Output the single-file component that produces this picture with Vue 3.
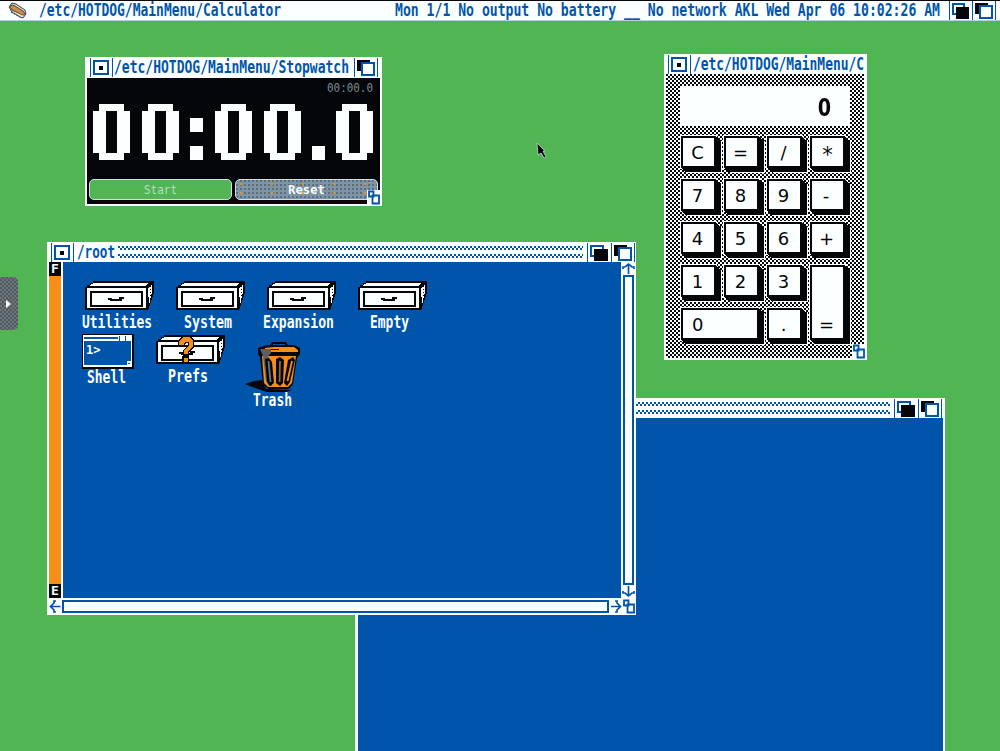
<script setup>
import { h } from 'vue'

const Px = (p) =>
  h('svg', { class: 'px', width: p.w, height: 20, style: { width: p.w + 'px' } }, [
    h('text', { x: 0, y: 16, textLength: p.w, lengthAdjust: 'spacingAndGlyphs' }, p.t),
  ])
Px.props = ['t', 'w']

const Depth = (p) =>
  h('svg', { class: 'gadget', width: 24, height: 19, viewBox: '0 0 24 19', 'shape-rendering': 'crispEdges' },
    p.front
      ? [
          h('path', { d: 'M0 0h1v19h-1zM23 0h1v19h-1z', fill: '#0055ab' }),
          h('path', { d: 'M3 2h13v11h-13z', fill: '#04060a' }),
          h('path', { d: 'M8 5h12v12h-12z', fill: '#fcffff', stroke: '#0055ab', 'stroke-width': 2 }),
        ]
      : [
          h('path', { d: 'M0 0h1v19h-1z', fill: '#0055ab' }),
          h('path', { d: 'M4 3h12v10h-12z', fill: '#fcffff', stroke: '#0055ab', 'stroke-width': 2 }),
          h('path', { d: 'M7 6h14v12h-14z', fill: '#04060a' }),
        ])
Depth.props = { front: Boolean }

const CloseBox = () =>
  h('svg', { class: 'gadget', width: 24, height: 19, viewBox: '0 0 24 19', 'shape-rendering': 'crispEdges' }, [
    h('path', { d: 'M0 0h1v19h-1zM22 0h1v19h-1z', fill: '#0055ab' }),
    h('path', { d: 'M4 3h14v13h-14z', fill: 'none', stroke: '#0055ab', 'stroke-width': 2 }),
    h('path', { d: 'M9 8h4v4h-4z', fill: '#04060a' }),
  ])

const Sizer = () =>
  h('svg', { class: 'sizer', width: 14, height: 15, viewBox: '0 0 14 15' }, [
    h('path', { d: 'M0 0h14v15h-14z', fill: '#fcffff', stroke: 'none' }),
    h('path', { d: 'M2 1.5h4.500v5h-4.500zM5.500 5.500h6.500v8h-6.500z', fill: 'none', stroke: '#0055ab', 'stroke-width': 1.8 }),
  ])

const bigDigits = [
  { c: '0', x: 6, s: 0 }, { c: '0', x: 55, s: 0 }, { c: ':', x: 103, s: 1 },
  { c: '0', x: 128, s: 0 }, { c: '0', x: 177, s: 0 }, { c: '.', x: 225, s: 1 }, { c: '0', x: 249, s: 0 },
]
const keys = ['C', '=', '/', '*', '7', '8', '9', '-', '4', '5', '6', '+', '1', '2', '3', '=', '0', '.']
const keyClass = (i) => ({ tall: i === 15, wide: i === 16, star: i === 3, dash: i === 7 })
const drawers = [
  { t: 'Utilities', w: 70, x: 22, y: 19 },
  { t: 'System', w: 48, x: 113, y: 19 },
  { t: 'Expansion', w: 71, x: 204, y: 19 },
  { t: 'Empty', w: 39, x: 295, y: 19 },
  { t: 'Prefs', w: 40, x: 93, y: 73, q: true },
]
</script>

<template>
  <div class="desk">
    <header class="bar">
      <svg class="dog" width="20" height="17" viewBox="0 0 20 17">
        <path d="M2 5L5 1l4 1 9 6 1 4-3 4-3-1-8-5z" fill="#e2d8c6" stroke="#39434a" />
        <path d="M3 4q2-2 5 0l8 5q4 4 0 4L5 8z" fill="#b88761" stroke="#3c342c" stroke-width=".8" />
        <path d="M4 5l3 2 1-2 2 4 2-1 1 3 3 0" fill="none" stroke="#f68e19" />
        <path d="M4 10l9 5" stroke="#39434a" stroke-dasharray="2 1" />
      </svg>
      <Px t="/etc/HOTDOG/MainMenu/Calculator" :w="242" />
      <span class="grow"></span>
      <Px t="Mon 1/1 No output No battery __ No network AKL Wed Apr 06 10:02:26 AM" :w="545" />
      <span class="bargad"><Depth /><Depth front /></span>
    </header>

    <section class="win back">
      <div class="title"><span class="stripes"></span><Depth /><Depth front /></div>
      <div class="blue"></div>
    </section>

    <section class="win root">
      <div class="title"><CloseBox /><Px t="/root" :w="38" /><span class="stripes"></span><Depth /><Depth front /></div>
      <div class="body">
        <div class="fuel"><b>F</b><i></i><b>E</b></div>
        <div class="blue">
          <div v-for="d in drawers" :key="d.t" class="item" :style="{ left: d.x + 'px', top: d.y + 'px' }">
            <svg width="70" height="30" viewBox="0 0 70 30" shape-rendering="crispEdges">
              <path d="M0 6h2V4h3V2h3V0H69V11L65 24L63 29H0z" fill="#04060a" />
              <path d="M4 5L9 2H64L60 5z" fill="#fcffff" />
              <path d="M63 8L67 3V11L64 24z" fill="#fcffff" />
              <path d="M65 5v16M67 4v12" stroke="#04060a" stroke-dasharray="1 2" />
              <path d="M2 7H61V27H2z" fill="#fcffff" />
              <path d="M6 11H57V25H6z" fill="#fcffff" stroke="#04060a" stroke-width="2" />
              <path d="M23 17h4v1h7v-2h5v2h-2v2H25v-1h-2z" fill="#04060a" />
              <g v-if="d.q">
                <path d="M22 5l4-4h8l4 4v7l-5 5v4h-6v-6l5-5v-2h-2l-2 4h-6zM26 21h7v8h-7z" fill="#04060a" />
                <path d="M23 6l4-4h7l3 4v6l-5 4v3h-4v-4l5-4v-4h-4l-1 3h-5zM28 23h4v4h-4z" fill="#f68e19" />
              </g>
            </svg>
            <Px :t="d.t" :w="d.w" />
          </div>
          <div class="item shell">
            <svg width="52" height="35" viewBox="0 0 52 35" shape-rendering="crispEdges">
              <path d="M0 0H52V35H0z" fill="#04060a" /><path d="M1 1H50V33H1z" fill="#fcffff" />
              <path d="M2 3H36V5H2zM2 7H49V31H2z" fill="#0055ab" />
              <path d="M37 2h1v5h-1zM43 2h1v5h-1z" fill="#0055ab" /><path d="M45 27h5v5h-5z" fill="#fcffff" />
              <path d="M46 29h2v1h-2z" fill="#0055ab" />
              <text x="4" y="20" class="prompt">1&gt;</text>
            </svg>
            <Px t="Shell" :w="39" />
          </div>
          <div class="item trash">
            <svg width="56" height="50" viewBox="0 0 56 50">
              <path d="M0 42l9-3 8-1 4 9 26 1-6 2H22L10 46z" fill="#04060a" />
              <path d="M13 6l9-3h3l2-3h14l2 3h6l6 3v6l-3 4-4 26-4 5H23l-5-5-3-27-2-3z" fill="#04060a" />
              <path d="M20 6l8-1h21l4 3v2H20z" fill="#f68e19" />
              <path d="M28 2h12v1H28z" fill="#0055ab" />
              <path d="M16 7h18v1H16zM20 11h33v1H20z" fill="#04060a" />
              <path d="M17 14h34l-4 27-4 4H23l-4-4z" fill="#f68e19" />
              <path d="M15 7h11v4l-3 3 3 9 1 21h-3l-3-5-3-25z" fill="#5c6064" />
              <g fill="#04060a"><path d="M20 17l4-1 3 4 2 21-4 3-3-4z" /><path d="M31 17l4-2 4 3-1 23-3 3-4-3z" /><path d="M43 18l5-3 2 3-5 22-3 4-3-3z" /></g>
              <g fill="none" stroke-width="1.8"><path d="M23.500 19l2 21" stroke="#70757a" /><path d="M35 19l-.5 21" stroke="#8a6a44" /><path d="M47 19l-4.500 20" stroke="#f68e19" /></g>
            </svg>
            <Px t="Trash" :w="39" />
          </div>
        </div>
        <div class="vscroll">
          <svg width="15" height="13" viewBox="0 0 15 13"><path d="M2 7V5h2l3.500-3 3.500 3h2v2M7.500 2v10" /></svg>
          <i></i>
          <svg width="15" height="13" viewBox="0 0 15 13"><path d="M2 6v2h2l3.500 3 3.500-3h2v-2M7.500 1v10" /></svg>
        </div>
      </div>
      <div class="hscroll">
        <svg width="14" height="15" viewBox="0 0 14 15"><path d="M8 2H6v2L2.500 7.500 6 11v2h2M2.500 7.500h10" /></svg>
        <i></i>
        <svg width="13" height="15" viewBox="0 0 13 15"><path d="M6 2h2v2l3.500 3.500L8 11v2H6M2 7.500h10" /></svg>
        <Sizer />
      </div>
    </section>

    <section class="win watch">
      <div class="title"><CloseBox /><Px t="/etc/HOTDOG/MainMenu/Stopwatch" :w="235" /><span class="grow"></span><Depth front /></div>
      <div class="face">
        <svg class="digits" width="293" height="100" viewBox="0 0 293 100">
          <defs>
            <filter id="cells" filterUnits="userSpaceOnUse" x="0" y="0" width="38" height="57" color-interpolation-filters="sRGB">
              <feFlood x="3" y="3" width="1" height="1" flood-color="#fff" result="dot" />
              <feOffset in="dot" dx="0" dy="0" x="0" y="0" width="6" height="7" result="cell" />
              <feTile in="cell" result="grid" />
              <feComposite in="SourceGraphic" in2="grid" operator="in" />
              <feComponentTransfer><feFuncA type="discrete" tableValues="0 1" /></feComponentTransfer>
              <feMorphology operator="dilate" radius="3" />
            </filter>
          </defs>
          <text class="mini" x="240" y="14" textLength="46" lengthAdjust="spacingAndGlyphs">00:00.0</text>
          <g v-for="(d, i) in bigDigits" :key="i" :transform="`translate(${d.x} 26)`">
            <g filter="url(#cells)">
              <text v-if="d.s" class="big" x="-6" y="56" textLength="25" lengthAdjust="spacingAndGlyphs">{{ d.c }}</text>
              <text v-else class="big zero" x="-4.500" y="57" textLength="46" lengthAdjust="spacingAndGlyphs">{{ d.c }}</text>
            </g>
          </g>
        </svg>
        <div class="btns">
          <button class="go"><Px t="Start" :w="33" /></button>
          <button class="re"><Px t="Reset" :w="37" /></button>
        </div>
      </div>
      <Sizer />
    </section>

    <section class="win calc">
      <div class="title"><CloseBox /><Px t="/etc/HOTDOG/MainMenu/C" :w="171" /></div>
      <div class="pad">
        <div class="out"><span>0</span></div>
        <div class="keys">
          <div v-for="(k, i) in keys" :key="i" class="key" :class="keyClass(i)">{{ k }}</div>
        </div>
      </div>
      <Sizer />
    </section>

    <div class="tab"><svg width="6" height="8"><path d="M0 0l5 4-5 4z" fill="#fcffff" /></svg></div>
    <svg class="cursor" width="12" height="18" viewBox="0 0 12 18"><path d="M1 1l8 8H7l3 6-2 1-3-5-3 2z" fill="#04060a" stroke="#c8d4d8" stroke-width=".8" /></svg>
  </div>
</template>

<style>
body { margin: 0; overflow: hidden; }
</style>

<style scoped>
.desk { position: relative; width: 1000px; height: 751px; overflow: hidden; background: #50b552; color: #0055ab; font-family: "DejaVu Sans Mono", monospace; }
.desk :deep(svg) { display: block; flex: none; }
.desk :deep(.px) { overflow: visible; fill: currentColor; font: bold 17px "DejaVu Sans Mono", monospace; }
.bar { display: flex; height: 21px; box-sizing: border-box; background: #fcffff; border-top: 1px solid #04060a; border-bottom: 1px solid #b8cfe0; padding: 0 4px 0 7px; }
.bar :deep(.px) { margin-top: -1px; }
.dog { margin: 1px 12px 0 0; }
.grow { flex: 1; }
.bargad { display: flex; margin-left: 9px; }
.bargad :deep(svg:first-child) { width: 23px; }
.win { position: absolute; background: #fcffff; display: flex; flex-direction: column; box-sizing: border-box; }
.title { display: flex; height: 20px; flex: none; box-sizing: border-box; padding-top: 1px; }
.title :deep(.px) { margin-top: -1px; }
.stripes { flex: 1; margin: 3px 4px 3px; background:
  repeating-linear-gradient(90deg, #0055ab 0 2px, transparent 2px 4px) 0 0 / 100% 2px no-repeat,
  repeating-linear-gradient(90deg, transparent 0 2px, #0055ab 2px 4px) 0 2px / 100% 2px no-repeat,
  repeating-linear-gradient(90deg, #0055ab 0 2px, transparent 2px 4px) 0 8px / 100% 2px no-repeat,
  repeating-linear-gradient(90deg, transparent 0 2px, #0055ab 2px 4px) 0 10px / 100% 2px no-repeat; }
.blue { position: relative; background: #0055ab; flex: 1; }
.back { left: 355px; top: 398px; width: 590px; height: 360px; padding: 0 2px 0 3px; }
.back .title { padding-right: 1px; }
.root { left: 47px; top: 242px; width: 589px; height: 373px; }
.root .title { padding: 1px 1px 0 4px; }
.root .title :deep(.px) { margin-left: 2px; }
.root .title .stripes { margin-left: 3px; }
.body { display: flex; height: 336px; }
.fuel { display: flex; flex-direction: column; width: 12px; margin: 0 2px 0 2px; }
.fuel b { height: 14px; background: #04060a; color: #fcffff; font-size: 13px; line-height: 14px; text-align: center; }
.fuel i { flex: 1; background: #f68e19; }
.vscroll { width: 15px; display: flex; flex-direction: column; align-items: center; }
.vscroll svg, .hscroll svg { fill: none; stroke: #0055ab; stroke-width: 1.7; }
.vscroll i { flex: 1; width: 7px; border: 2px solid #0055ab; }
.hscroll { display: flex; align-items: center; height: 17px; padding-left: 1px; }
.hscroll i { flex: 1; height: 9px; border: 2px solid #0055ab; }
.item { position: absolute; width: 70px; display: flex; flex-direction: column; align-items: center; color: #fcffff; }
.item :deep(.px) { margin: 1px 0 0 -7px; }
.shell { left: 19px; top: 72px; width: 52px; }
.shell :deep(.px) { margin: -2px 0 0 -3px; }
.trash { left: 182px; top: 80px; width: 56px; }
.trash :deep(.px) { margin: -2px 0 0 -2px; }
.prompt { fill: #fcffff; font: bold 12px "DejaVu Sans Mono", monospace; }
.watch { left: 85px; top: 57px; width: 297px; height: 149px; padding: 0 2px; }
.watch .title { padding-left: 3px; padding-right: 2px; }
.watch .title :deep(.px) { margin-left: 0; }
.face { height: 126px; margin-top: 1px; background: #04060a; display: flex; flex-direction: column; }
.mini { fill: #7c8a94; font: 13px "DejaVu Sans Mono", monospace; }
.big { fill: #fcffff; stroke: #fcffff; stroke-width: 2; font: bold 76px "DejaVu Sans", sans-serif; }
.zero { font-size: 80px; }
.btns { display: flex; gap: 3px; padding: 1px 2px 0; }
.btns button { flex: 1; height: 21px; border: 1.5px solid #cfe0e4; border-radius: 5px; padding: 0; display: flex; justify-content: center; align-items: center; color: #fcffff; }
.btns :deep(.px) { font-size: 13px; height: 19px; margin-top: -5px; }
.go { background: #50b552; color: #b9dcc5 !important; }
.go :deep(.px) { font-weight: normal; }
.re { background:
  radial-gradient(circle at 2px 2px, #f68e19 1px, transparent 1.3px) 3px 2px / 31px 9px,
  radial-gradient(circle at 1px 1px, #5f6d77 0.800px, transparent 1px) 0 0 / 4px 4px, #7d95a8; }
.win > :deep(.sizer) { position: absolute; right: 1px; bottom: 1px; }
.calc { left: 664px; top: 54px; width: 203px; height: 306px; }
.calc .title { padding-left: 4px; }
.calc .title :deep(.px) { margin-left: 1px; }
.pad { flex: 1; margin: 0 3px 2px 2px; padding: 12px 14px 0; background:
  radial-gradient(circle at 1px 1px, #04060a 0.8px, transparent 1.3px) 0 0 / 4px 4px,
  radial-gradient(circle at 3px 3px, #04060a 0.8px, transparent 1.3px) 0 0 / 4px 4px; }
.out { height: 40px; background: #fcffff; display: flex; justify-content: flex-end; color: #04060a; }
.out span { font: bold 24px/45px "DejaVu Sans", sans-serif; transform: scaleX(.8); margin-right: 17px; }
.keys { display: grid; grid-template-columns: repeat(4, 35px); grid-auto-rows: 32px; gap: 11px 8px; padding: 10px 0 0 1px; }
.key { box-sizing: border-box; background: #fcffff; border: 2px solid #04060a; color: #04060a; font: 18px/30px "DejaVu Sans", sans-serif; text-align: center; padding-right: 2px; box-shadow: 1px 1px #04060a, 2px 2px #04060a, 3px 3px #04060a, 4px 4px #04060a, 5px 4px #04060a, 0 0 0 1px #fcffff, 6px 5px #fcffff; }
.star { font-size: 21px; line-height: 34px; padding: 0; }
.dash { padding-right: 3px; }
.tall { grid-column: 4; grid-row: 4 / 6; padding-top: 43px; line-height: 30px; }
.wide { grid-column: 1 / 3; grid-row: 5; text-align: left; padding-left: 9px; }
.tab { position: absolute; left: 0; top: 277px; width: 18px; height: 53px; border-radius: 0 5px 5px 0; display: flex; align-items: center; justify-content: center; background: conic-gradient(#565b60 25%, #68737c 0 50%, #565b60 0 75%, #68737c 0) 0 0 / 4px 4px; }
.cursor { position: absolute; left: 536px; top: 142px; }
</style>
